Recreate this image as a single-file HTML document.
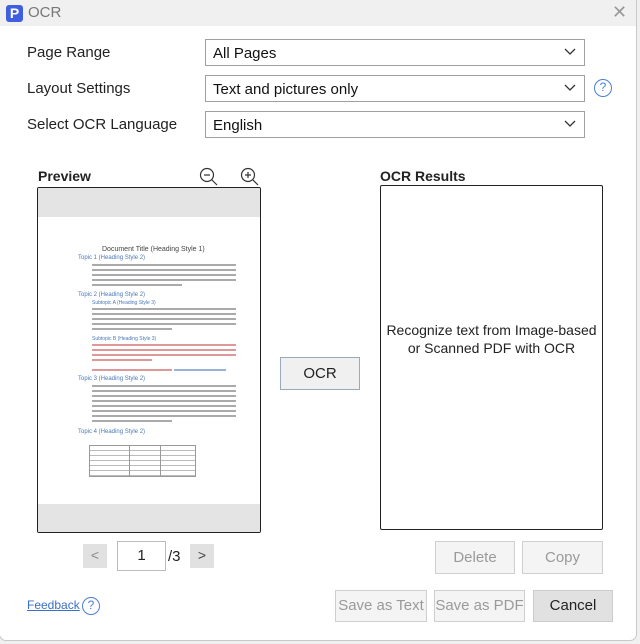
<!DOCTYPE html>
<html><head><style>
*{box-sizing:border-box;margin:0;padding:0}
body{width:640px;height:644px;background:#f0f0f0;font-family:"Liberation Sans",sans-serif;position:relative;overflow:hidden;color:#222}
.win{position:absolute;left:0;top:0;width:636px;height:640px;background:#fff;box-shadow:0 0 0 1px #c8c8c8;border-radius:0 0 6px 6px}
.title{position:absolute;left:0;top:0;width:100%;height:26px;background:#f0f0f0}
.a{position:absolute}
.lbl{font-size:15px;color:#222}
.dd{position:absolute;left:205px;width:380px;height:27px;border:1px solid #a0a0a0;font-size:15px;padding:5px 7px;color:#111}
.dd svg{position:absolute;right:8px;top:8px}
.btn{position:absolute;border:1px solid #cfcfcf;background:#f4f4f4;color:#9a9a9a;font-size:15px;text-align:center}
.l{position:absolute;height:1.5px;background:#aaa}
.r{background:#d99}
</style></head><body>
<div class="win">
<div class="title"></div>
<div class="a" style="left:6px;top:5px;width:17px;height:17px;background:#3f5fe0;border-radius:3px;color:#fff;font-weight:bold;font-size:14px;text-align:center;line-height:17px">P</div>
<div class="a" style="left:28px;top:4px;font-size:15px;color:#777">OCR</div>
<div class="a" style="left:612px;top:2px;font-size:18px;color:#999">✕</div>

<div class="a lbl" style="left:27px;top:44px">Page Range</div>
<div class="a lbl" style="left:27px;top:80px">Layout Settings</div>
<div class="a lbl" style="left:27px;top:116px">Select OCR Language</div>
<div class="dd" style="top:39px">All Pages<svg width="12" height="8"><path d="M1 1l5 5 5-5" fill="none" stroke="#333" stroke-width="1.3"/></svg></div>
<div class="dd" style="top:75px">Text and pictures only<svg width="12" height="8"><path d="M1 1l5 5 5-5" fill="none" stroke="#333" stroke-width="1.3"/></svg></div>
<div class="dd" style="top:111px">English<svg width="12" height="8"><path d="M1 1l5 5 5-5" fill="none" stroke="#333" stroke-width="1.3"/></svg></div>
<div class="a" style="left:594px;top:79px;width:18px;height:18px;border:1.5px solid #4a7fd4;border-radius:50%;color:#4a7fd4;font-size:12px;text-align:center;line-height:15px">?</div>

<div class="a" style="left:38px;top:168px;font-size:14px;font-weight:bold">Preview</div>
<svg class="a" style="left:199px;top:167px" width="20" height="20"><circle cx="8" cy="8" r="6.5" fill="none" stroke="#333" stroke-width="1.2"/><path d="M5 8h6M13 13l5 5" stroke="#333" stroke-width="1.2"/></svg>
<svg class="a" style="left:240px;top:167px" width="20" height="20"><circle cx="8" cy="8" r="6.5" fill="none" stroke="#333" stroke-width="1.2"/><path d="M5 8h6M8 5v6M13 13l5 5" stroke="#333" stroke-width="1.2"/></svg>
<div class="a" style="left:380px;top:168px;font-size:14px;font-weight:bold">OCR Results</div>

<div class="a" style="left:37px;top:187px;width:224px;height:346px;border:1px solid #222;border-radius:2px;background:#fff;overflow:hidden">
 <div class="a" style="left:0;top:0;width:100%;height:29px;background:#e4e4e4"></div>
 <div class="a" style="left:0;bottom:0;width:100%;height:28px;background:#e4e4e4"></div>
 <div class="a" style="left:64px;top:58px;font-size:7px;color:#444">Document Title (Heading Style 1)</div>
 <div class="a" style="left:40px;top:67px;font-size:6px;color:#4a78b8">Topic 1 (Heading Style 2)</div>
 <div class="l" style="left:54px;top:76px;width:144px"></div><div class="l" style="left:54px;top:81px;width:144px"></div><div class="l" style="left:54px;top:86px;width:144px"></div><div class="l" style="left:54px;top:91px;width:144px"></div><div class="l" style="left:54px;top:96px;width:90px"></div>
 <div class="a" style="left:40px;top:104px;font-size:6px;color:#4a78b8">Topic 2 (Heading Style 2)</div>
 <div class="a" style="left:54px;top:112px;font-size:5px;color:#4a78b8">Subtopic A (Heading Style 3)</div>
 <div class="l" style="left:54px;top:120px;width:144px"></div><div class="l" style="left:54px;top:125px;width:144px"></div><div class="l" style="left:54px;top:130px;width:144px"></div><div class="l" style="left:54px;top:135px;width:144px"></div><div class="l" style="left:54px;top:140px;width:80px"></div>
 <div class="a" style="left:54px;top:148px;font-size:5px;color:#4a78b8">Subtopic B (Heading Style 3)</div>
 <div class="l r" style="left:54px;top:156px;width:144px"></div><div class="l r" style="left:54px;top:161px;width:144px"></div><div class="l r" style="left:54px;top:166px;width:144px"></div><div class="l r" style="left:54px;top:171px;width:60px"></div>
 <div class="l r" style="left:54px;top:181px;width:80px"></div><div class="l" style="left:136px;top:181px;width:52px;background:#9ab0d8"></div>
 <div class="a" style="left:40px;top:188px;font-size:6px;color:#4a78b8">Topic 3 (Heading Style 2)</div>
 <div class="l" style="left:54px;top:197px;width:144px"></div><div class="l" style="left:54px;top:202px;width:144px"></div><div class="l" style="left:54px;top:207px;width:144px"></div><div class="l" style="left:54px;top:212px;width:144px"></div><div class="l" style="left:54px;top:217px;width:144px"></div><div class="l" style="left:54px;top:222px;width:144px"></div><div class="l" style="left:54px;top:227px;width:144px"></div><div class="l" style="left:54px;top:232px;width:80px"></div>
 <div class="a" style="left:40px;top:241px;font-size:6px;color:#4a78b8">Topic 4 (Heading Style 2)</div>
 <div class="a" style="left:51px;top:257px;width:107px;height:32px;border:1px solid #999;background:repeating-linear-gradient(#fff 0 4px,#bbb 4px 5px)"></div>
 <div class="a" style="left:91px;top:257px;width:1px;height:32px;background:#999"></div>
 <div class="a" style="left:122px;top:257px;width:1px;height:32px;background:#999"></div>
</div>

<div class="a" style="left:380px;top:185px;width:223px;height:345px;border:1px solid #222;border-radius:2px;background:#fff"></div>
<div class="a" style="left:380px;top:321px;width:223px;text-align:center;font-size:14px;line-height:18px;color:#222">Recognize text from Image-based<br>or Scanned PDF with OCR</div>

<div class="a" style="left:280px;top:357px;width:80px;height:33px;border:1px solid #9ab;background:#f0f0f0;font-size:15px;text-align:center;line-height:31px">OCR</div>

<div class="a" style="left:83px;top:544px;width:24px;height:24px;background:#e1e1e1;color:#888;text-align:center;line-height:23px;font-size:14px">&lt;</div>
<div class="a" style="left:117px;top:541px;width:49px;height:30px;border:1px solid #bbb;font-size:15px;text-align:center;line-height:28px">1</div>
<div class="a" style="left:168px;top:548px;font-size:15px">/3</div>
<div class="a" style="left:190px;top:544px;width:24px;height:24px;background:#e1e1e1;color:#444;text-align:center;line-height:23px;font-size:14px">&gt;</div>

<div class="btn" style="left:435px;top:541px;width:80px;height:33px;line-height:31px">Delete</div>
<div class="btn" style="left:522px;top:541px;width:81px;height:33px;line-height:31px">Copy</div>
<div class="btn" style="left:335px;top:590px;width:92px;height:32px;line-height:30px">Save as Text</div>
<div class="btn" style="left:434px;top:590px;width:91px;height:32px;line-height:30px">Save as PDF</div>
<div class="btn" style="left:533px;top:590px;width:80px;height:32px;line-height:30px;background:#e1e1e1;color:#222;border-color:#ccc">Cancel</div>

<div class="a" style="left:27px;top:598px;font-size:12px;color:#3a6fc4;text-decoration:underline">Feedback</div>
<div class="a" style="left:82px;top:597px;width:18px;height:18px;border:1.5px solid #4a7fd4;border-radius:50%;color:#4a7fd4;font-size:12px;text-align:center;line-height:15px">?</div>
</div>
</body></html>
